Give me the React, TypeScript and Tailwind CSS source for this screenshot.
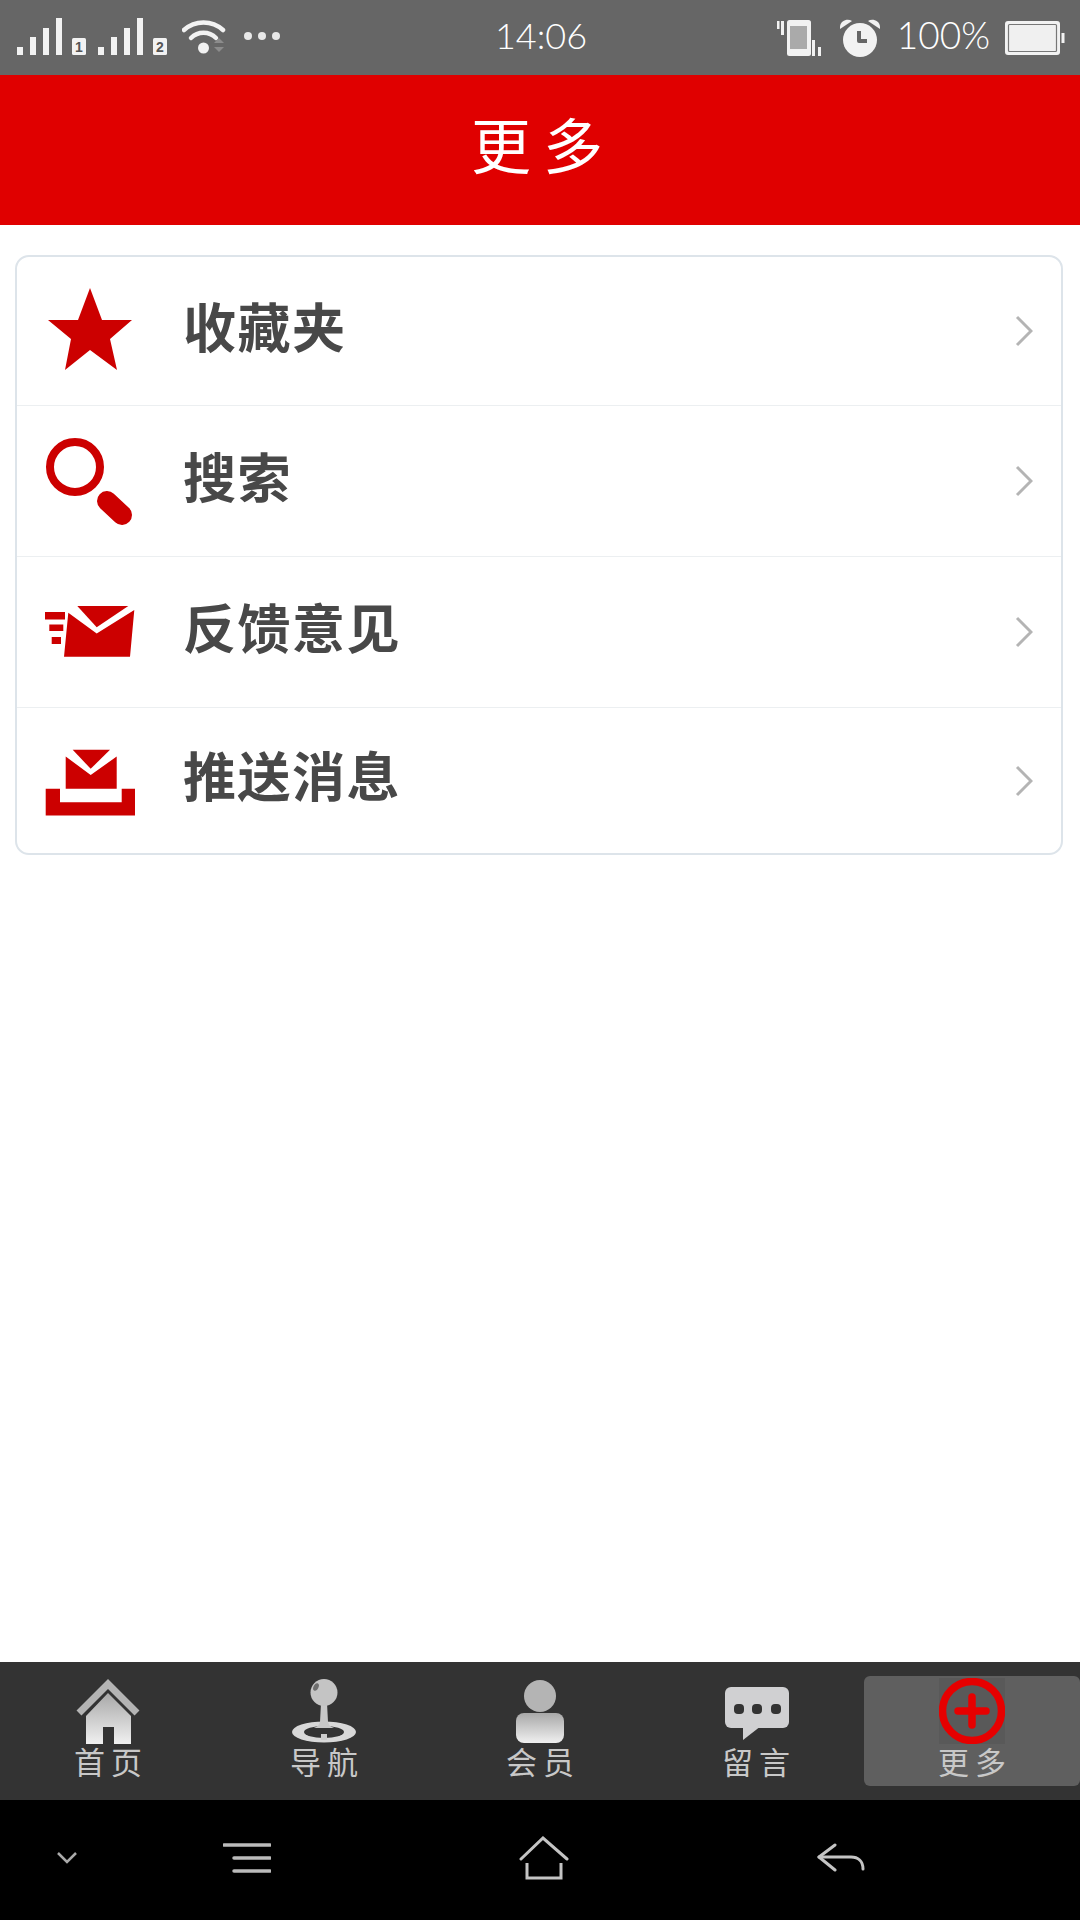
const CJK = "font-['Noto_Sans_CJK_SC','Noto_Sans',sans-serif]";

function SignalBars({ badge }: { badge: string }) {
  return (
    <svg width="72" height="40" viewBox="0 0 72 40">
      <rect x="0" y="29" width="6" height="8" fill="#f2f2f2" />
      <rect x="13" y="19" width="6" height="18" fill="#f2f2f2" />
      <rect x="26" y="10" width="6" height="27" fill="#f2f2f2" />
      <rect x="39" y="0" width="6" height="37" fill="#f2f2f2" />
      <rect x="55" y="20" width="14" height="17" rx="1.5" fill="#f2f2f2" />
      <text x="62" y="34" textAnchor="middle" fontSize="14" fontWeight="700" fontFamily="Liberation Sans" fill="#555">
        {badge}
      </text>
    </svg>
  );
}

function Wifi() {
  return (
    <svg width="44" height="36" viewBox="0 0 44 36" fill="none">
      <path d="M2 11 C13 1 30 1 41 11" stroke="#f2f2f2" strokeWidth="4.5" strokeLinecap="round" />
      <path d="M9 19 C16 12 27 12 34 19" stroke="#f2f2f2" strokeWidth="4.5" strokeLinecap="round" />
      <circle cx="21.5" cy="29" r="5.5" fill="#f2f2f2" />
      <path d="M32 24 L37 19 L42 24 Z" fill="#8c8c8c" />
      <path d="M32 28 L42 28 L37 33 Z" fill="#8c8c8c" />
    </svg>
  );
}

function Vibrate() {
  return (
    <svg width="45" height="36" viewBox="0 0 45 36">
      <rect x="0" y="1" width="2.5" height="8" fill="#f2f2f2" />
      <rect x="4" y="1" width="3" height="14" fill="#f2f2f2" />
      <rect x="10" y="0" width="24" height="36" rx="2.5" fill="#f2f2f2" />
      <rect x="13" y="6" width="17" height="23" fill="#aaaaaa" />
      <rect x="35" y="20" width="3" height="16" fill="#f2f2f2" />
      <rect x="41" y="27" width="3" height="9" fill="#f2f2f2" />
    </svg>
  );
}

function Alarm() {
  return (
    <svg width="40" height="38" viewBox="0 0 40 38">
      <circle cx="20" cy="21" r="17" fill="#f2f2f2" />
      <path d="M0 10 C-1 2 7 -1 12 2 Z" fill="#f2f2f2" />
      <path d="M40 10 C41 2 33 -1 28 2 Z" fill="#f2f2f2" />
      <path d="M19 12 V22 H27" fill="none" stroke="#666666" strokeWidth="4" strokeLinejoin="round" />
    </svg>
  );
}

function Battery() {
  return (
    <svg width="60" height="34" viewBox="0 0 60 34">
      <rect x="0" y="0" width="55" height="34" rx="3" fill="#f2f2f2" />
      <rect x="3.5" y="3.5" width="48" height="27" rx="1" fill="#f0f0f0" stroke="#777777" strokeWidth="1.2" />
      <rect x="56.5" y="12" width="3" height="10" fill="#f2f2f2" />
    </svg>
  );
}

function StatusBar() {
  return (
    <div className="grid h-[75px] grid-cols-[1fr_auto_1fr] items-center bg-[#666666] pl-[17px] pr-[15px] text-white font-['Lato',sans-serif] font-light">
      <div className="flex items-center">
        <SignalBars badge="1" />
        <div className="ml-[9px]">
          <SignalBars badge="2" />
        </div>
        <div className="ml-[12px] pb-[2px]">
          <Wifi />
        </div>
        <div className="ml-[18px] flex gap-[6px] pb-[3px]">
          <span className="h-[8px] w-[8px] rounded-full bg-[#e8e8e8]" />
          <span className="h-[8px] w-[8px] rounded-full bg-[#e8e8e8]" />
          <span className="h-[8px] w-[8px] rounded-full bg-[#e8e8e8]" />
        </div>
      </div>
      <div className="pb-[6px] text-[36px] leading-none">14:06</div>
      <div className="flex items-center justify-end">
        <Vibrate />
        <div className="ml-[18px]">
          <Alarm />
        </div>
        <span className="ml-[17px] pb-[6px] text-[37px] leading-none">100%</span>
        <div className="ml-[15px]">
          <Battery />
        </div>
      </div>
    </div>
  );
}

function StarIcon() {
  return (
    <svg width="90" height="90" viewBox="0 1 90 90" className="shrink-0">
      <polygon points="45,3 57,35 87,35 65,54 72,85 45,65 20,85 26,54 3,35 33,35" fill="#cc0000" />
    </svg>
  );
}

function SearchIcon() {
  return (
    <svg width="90" height="90" viewBox="0 -1 90 90" fill="none" className="shrink-0">
      <circle cx="30" cy="30" r="25" stroke="#cc0000" strokeWidth="8" />
      <line x1="62" y1="64" x2="77" y2="78" stroke="#cc0000" strokeWidth="20" strokeLinecap="round" />
    </svg>
  );
}

function MailIcon() {
  return (
    <svg width="90" height="90" viewBox="0 1 90 90" fill="#cc0000" className="shrink-0">
      <polygon points="32.3,20 83.3,20 51.7,41.3" />
      <polygon points="23.3,26.7 51.7,47.5 89.3,24 85,70.7 19,70.7" />
      <rect x="0" y="26" width="20" height="7.5" />
      <rect x="4.3" y="38.5" width="14" height="6.5" />
      <rect x="6.7" y="51" width="9.3" height="7" />
    </svg>
  );
}

function InboxIcon() {
  return (
    <svg width="90" height="90" viewBox="0 -1.5 90 90" fill="#cc0000" className="shrink-0">
      <polygon points="27.7,12.3 65,12.3 45.7,31.3" />
      <polygon points="20.7,19 45.7,37.5 71.7,19 71.7,51.3 20.7,51.3" />
      <polygon points="0.7,51.3 15,51.3 15,64.7 76.7,64.7 76.7,51.3 90,51.3 90,78 0.7,78" />
    </svg>
  );
}

const menuItems = [
  { label: "收藏夹", icon: <StarIcon />, height: "h-[148px]" },
  { label: "搜索", icon: <SearchIcon />, height: "h-[151px]" },
  { label: "反馈意见", icon: <MailIcon />, height: "h-[151px]" },
  { label: "推送消息", icon: <InboxIcon />, height: "h-[146px]" },
];

function GradDefs({ id }: { id: string }) {
  return (
    <defs>
      <linearGradient id={id} x1="0" y1="0" x2="0" y2="1">
        <stop offset="0" stopColor="#a8a8a8" />
        <stop offset="1" stopColor="#f0f0f0" />
      </linearGradient>
    </defs>
  );
}

function HomeTab() {
  return (
    <svg width="66" height="66" viewBox="0 0 66 66">
      <GradDefs id="g-home" />
      <path d="M4 35 L33 6 L62 35" fill="none" stroke="#b4b4b4" strokeWidth="7" />
      <path d="M33 15 L56 38 V66 H39 V49 H28 V66 H11 V38 Z" fill="url(#g-home)" />
    </svg>
  );
}

function JoystickTab() {
  return (
    <svg width="66" height="66" viewBox="0 0 66 66">
      <ellipse cx="33" cy="54" rx="32" ry="10.5" fill="#d8d8d8" />
      <ellipse cx="33" cy="54" rx="20" ry="6" fill="#333333" />
      <rect x="30" y="56" width="6" height="6" fill="#cccccc" />
      <path d="M30 25 H36 L37 44 C38 48 41 49 43 50 H23 C25 49 28 48 29 44 Z" fill="#c8c8c8" />
      <circle cx="33" cy="14.5" r="13.5" fill="#c4c4c4" />
      <ellipse cx="25" cy="9" rx="2.5" ry="4" fill="#6e6e6e" transform="rotate(25 25 9)" />
    </svg>
  );
}

function MemberTab() {
  return (
    <svg width="66" height="66" viewBox="0 0 66 66">
      <GradDefs id="g-mem" />
      <circle cx="33" cy="18" r="16" fill="#b4b4b4" />
      <rect x="9" y="35" width="48" height="30" rx="8" fill="url(#g-mem)" />
    </svg>
  );
}

function ChatTab() {
  return (
    <svg width="66" height="66" viewBox="-2 0 66 66">
      <rect x="0" y="9" width="64" height="41" rx="6" fill="#d0d0d2" />
      <polygon points="18,48 36,48 18,62" fill="#d0d0d2" />
      <rect x="9" y="26" width="10" height="10" rx="4" fill="#333333" />
      <rect x="27" y="26" width="10" height="10" rx="4" fill="#333333" />
      <rect x="46" y="26" width="10" height="10" rx="4" fill="#333333" />
    </svg>
  );
}

function PlusTab() {
  return (
    <svg width="66" height="66" viewBox="0 0 66 66" fill="none">
      <rect x="0" y="0" width="66" height="66" fill="#595959" />
      <circle cx="33" cy="33" r="29.5" stroke="#e60000" strokeWidth="7.5" />
      <path d="M33 19 V47 M19 33 H47" stroke="#e60000" strokeWidth="7.5" strokeLinecap="round" />
    </svg>
  );
}

const tabs = [
  { label: "首页", icon: <HomeTab /> },
  { label: "导航", icon: <JoystickTab /> },
  { label: "会员", icon: <MemberTab /> },
  { label: "留言", icon: <ChatTab /> },
  { label: "更多", icon: <PlusTab />, active: true },
];

function TabBar() {
  return (
    <div className="grid h-[138px] grid-cols-5 items-center bg-[#333333]">
      {tabs.map((tab) => (
        <div
          key={tab.label}
          className={`flex h-[110px] flex-col items-center rounded-[6px] pt-[2px] ${tab.active ? "bg-[#5f5f5f]" : ""}`}
        >
          {tab.icon}
          <span className={`${CJK} -mt-[2px] pl-[6px] text-[31px] leading-[38px] tracking-[6px] text-[#c8c8c8]`}>
            {tab.label}
          </span>
        </div>
      ))}
    </div>
  );
}

function SystemNav() {
  return (
    <div className="flex h-[120px] items-center bg-black pb-[4px]">
      <svg className="ml-[56px]" width="22" height="14" viewBox="0 0 22 14" fill="none">
        <path d="M2 2 L11 11 L20 2" stroke="#aaaaaa" strokeWidth="2.5" />
      </svg>
      <svg className="ml-[145px]" width="48" height="30" viewBox="0 0 48 30" fill="none" stroke="#bbbbbb" strokeWidth="3.5">
        <path d="M1 2 H47" strokeLinecap="round" />
        <path d="M11 15 H47" strokeLinecap="round" />
        <path d="M11 28 H47" strokeLinecap="round" />
      </svg>
      <svg className="ml-[248px]" width="50" height="44" viewBox="0 0 50 44" fill="none" stroke="#c4c4c4" strokeWidth="3">
        <path d="M2 23 L24 2 L48 23" strokeLinecap="round" />
        <path d="M8 27 V42 H42 V27" />
      </svg>
      <svg className="ml-[248px]" width="48" height="30" viewBox="0 0 48 30" fill="none" stroke="#c4c4c4" strokeWidth="3" strokeLinecap="round" strokeLinejoin="round">
        <path d="M18 2 L2 14 L18 27" />
        <path d="M2 14 H34 C41 14 46 18 46 26" />
      </svg>
    </div>
  );
}

export default function App() {
  return (
    <div className={`flex h-[1920px] w-[1080px] flex-col bg-white ${CJK}`}>
      <StatusBar />

      {/* Header */}
      <header className="flex h-[150px] items-center justify-center bg-[#e00000] pb-[14px] pl-[6px] text-[60px] leading-none tracking-[12px] text-white">
        更多
      </header>

      {/* Menu card */}
      <main className="flex-1 pl-[15px] pr-[17px] pt-[30px]">
        <div className="rounded-[14px] border-2 border-[#dde4ea] bg-white">
          {menuItems.map((item, i) => (
            <div
              key={item.label}
              className={`flex items-center pl-[28px] pr-[28px] ${item.height} ${i > 0 ? "border-t border-[#eceff1]" : ""}`}
            >
              {item.icon}
              <span className="ml-[48px] flex-1 pb-[12px] text-[53px] font-bold leading-none tracking-[1.5px] text-[#484848]">
                {item.label}
              </span>
              <svg width="18" height="32" viewBox="0 0 18 32" fill="none" className="shrink-0">
                <path d="M2 2 L16 16 L2 30" stroke="#b4b4b4" strokeWidth="3" />
              </svg>
            </div>
          ))}
        </div>
      </main>

      <TabBar />
      <SystemNav />
    </div>
  );
}
